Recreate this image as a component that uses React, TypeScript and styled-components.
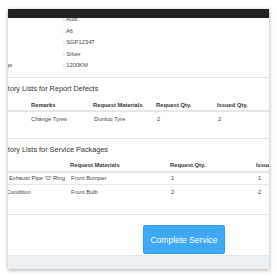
import React from 'react';
import styled, { createGlobalStyle } from 'styled-components';

const GlobalStyle = createGlobalStyle`
  html, body {
    margin: 0;
    padding: 0;
    background: #ffffff;
    font-family: "Liberation Sans", Arial, sans-serif;
    color: #333;
  }
`;

const Page = styled.div`
  width: 277px;
  height: 277px;
  padding: 9px 8px 0 8px;
  box-sizing: border-box;
  overflow: hidden;
`;

const Card = styled.div`
  width: 261px;
  height: 260px;
  display: flex;
  flex-direction: column;
  background: #fff;
  box-shadow: 0 1px 4px rgba(0, 0, 0, 0.35);
  overflow: hidden;
`;

const TopBar = styled.div`
  height: 9px;
  flex-shrink: 0;
  background: #222;
`;

const Body = styled.div`
  flex: 1;
  overflow: hidden;
`;

// the modal content is wider than the window, so it sits scrolled
const Scrolled = styled.div`
  width: 432px;
  margin: -4px 0 0 -40px;
`;

const InfoBlock = styled.div`
  padding: 0 0 5.5px 24px;
  border-bottom: 1px solid #e6e6e6;
`;

const InfoRow = styled.div`
  display: grid;
  grid-template-columns: 71px 1fr;
  height: 11.5px;
  line-height: 11.5px;
  font-size: 5.8px;
  color: #444;
`;

const Section = styled.div<{ $pad: number }>`
  padding-bottom: ${p => p.$pad}px;
  border-bottom: 1px solid #e6e6e6;
`;

const Heading = styled.div<{ $h: number }>`
  height: ${p => p.$h}px;
  line-height: ${p => p.$h}px;
  padding-left: 22px;
  font-size: 7.3px;
  color: #333;
  white-space: nowrap;
`;

const Row = styled.div<{ $cols: string; $h: number; $head?: boolean }>`
  display: grid;
  grid-template-columns: ${p => p.$cols};
  height: ${p => p.$h}px;
  line-height: ${p => p.$h}px;
  font-size: 5.8px;
  font-weight: ${p => (p.$head ? 700 : 400)};
  color: ${p => (p.$head ? '#333' : '#444')};
  white-space: nowrap;
  border-bottom: ${p => (p.$head ? '1px solid #e6e6e6' : 'none')};

  & + & {
    border-top: ${p => (p.$head ? 'none' : '1px solid #e6e6e6')};
  }
`;

const Cell = styled.div<{ $nudge?: number }>`
  padding-left: ${p => p.$nudge || 0}px;
`;

const ButtonRow = styled.div`
  display: flex;
  justify-content: center;
  padding-top: 10px;
`;

const CompleteButton = styled.button`
  width: 82px;
  height: 29px;
  background: #3ea9f5;
  border: 1px solid #2f9be8;
  border-radius: 2px;
  color: #fff;
  font-family: "Liberation Sans", Arial, sans-serif;
  font-size: 8.5px;
  padding: 0;
  cursor: pointer;
`;

const Footer = styled.div`
  height: 13px;
  flex-shrink: 0;
  background: #eef1f4;
  border-top: 1px solid #e4e8ec;
`;

const info = [
  { label: 'Make', value: ': Audi' },
  { label: 'Model', value: ': A6' },
  { label: 'Plate', value: ': SGP1234T' },
  { label: 'Color', value: ': Silver' },
  { label: 'Mileage', value: ': 1200KM' },
];

const defectCols = '63px 62px 63px 61px 1fr';
const packageCols = '102px 100px 86px 1fr';

const App: React.FC = () => {
  return (
    <>
      <GlobalStyle />
      <Page>
        <Card>
          <TopBar />
          <Body>
            <Scrolled>
              <InfoBlock>
                {info.map(item => (
                  <InfoRow key={item.label}>
                    <span>{item.label}</span>
                    <span>{item.value}</span>
                  </InfoRow>
                ))}
              </InfoBlock>

              <Section $pad={12}>
                <Heading $h={22}>Inventory Lists for Report Defects</Heading>
                <Row $cols={defectCols} $h={10} $head>
                  <Cell>Defect</Cell>
                  <Cell>Remarks</Cell>
                  <Cell>Request Materials</Cell>
                  <Cell>Request Qty.</Cell>
                  <Cell>Issued Qty.</Cell>
                </Row>
                <Row $cols={defectCols} $h={14}>
                  <Cell>Tyres</Cell>
                  <Cell $nudge={-1}>Change Tyres</Cell>
                  <Cell $nudge={1}>Dunlop Tyre</Cell>
                  <Cell $nudge={1}>2</Cell>
                  <Cell $nudge={1}>2</Cell>
                </Row>
              </Section>

              <Section $pad={14}>
                <Heading $h={21}>Inventory Lists for Service Packages</Heading>
                <Row $cols={packageCols} $h={11} $head>
                  <Cell $nudge={18}>Item</Cell>
                  <Cell>Request Materials</Cell>
                  <Cell>Request Qty.</Cell>
                  <Cell>Issued Qty.</Cell>
                </Row>
                <Row $cols={packageCols} $h={11}>
                  <Cell $nudge={18}>Replace Exhaust Pipe 'O' Ring</Cell>
                  <Cell $nudge={1}>Front Bumper</Cell>
                  <Cell $nudge={1}>1</Cell>
                  <Cell $nudge={2}>1</Cell>
                </Row>
                <Row $cols={packageCols} $h={15}>
                  <Cell $nudge={18}>Vehicle Condition</Cell>
                  <Cell $nudge={1}>Front Bulb</Cell>
                  <Cell $nudge={1}>2</Cell>
                  <Cell $nudge={2}>2</Cell>
                </Row>
              </Section>

              <ButtonRow>
                <CompleteButton>Complete Service</CompleteButton>
              </ButtonRow>
            </Scrolled>
          </Body>
          <Footer />
        </Card>
      </Page>
    </>
  );
};

export default App;
